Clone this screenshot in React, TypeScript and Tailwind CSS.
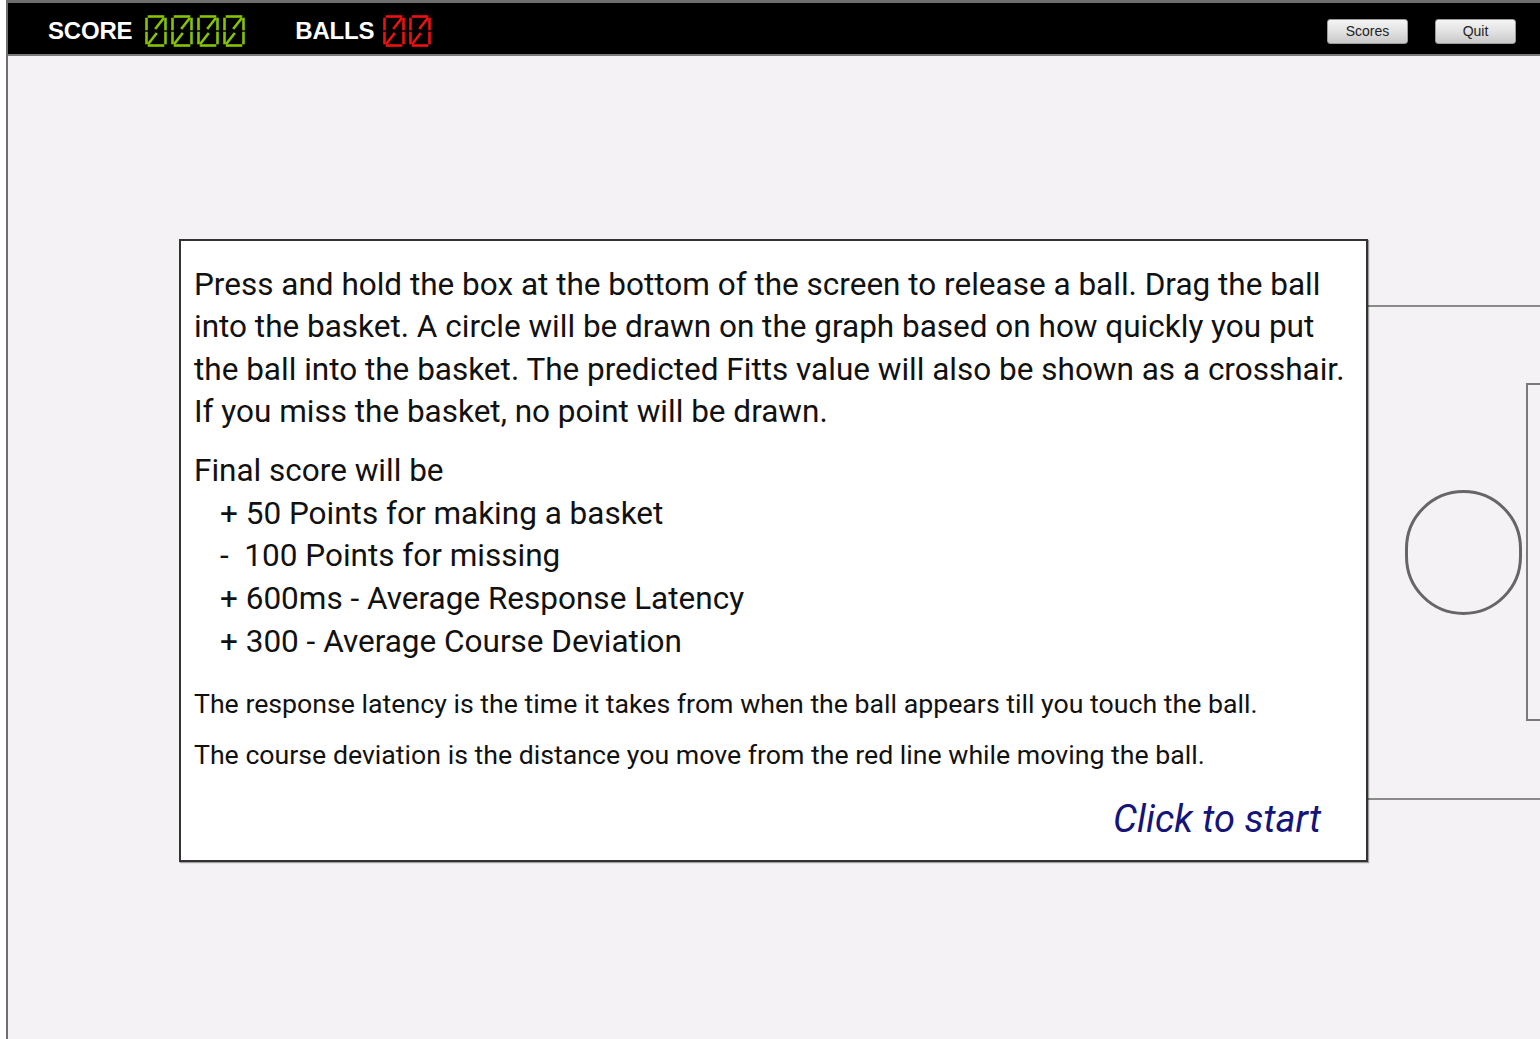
import React from 'react';

// one segmented "0" of the LCD counter, diagonal strokes included
function Digit({ color }: { color: string }) {
  const segs = [
    'M5 2.5 L19 2.5',
    'M2.5 5 L2.5 15',
    'M21.5 5 L21.5 15',
    'M2.5 19 L2.5 29',
    'M21.5 19 L21.5 29',
    'M5 31.5 L19 31.5',
    'M12 14 L19 5',
    'M5 29 L12 20',
  ];
  return (
    <svg width="26" height="34" viewBox="0 0 24 34" className="block">
      {segs.map((d, i) => (
        <path key={i} d={d} stroke={color} strokeWidth="2.6" fill="none" strokeLinecap="square" />
      ))}
    </svg>
  );
}

function Counter({ n, color }: { n: number; color: string }) {
  return (
    <div className="flex">
      {Array.from({ length: n }).map((_, i) => (
        <Digit key={i} color={color} />
      ))}
    </div>
  );
}

function BarButton({ label }: { label: string }) {
  return (
    <button className="w-[81px] h-[25px] rounded-[3px] border border-[#9a9a9a] bg-gradient-to-b from-[#f4f4f4] via-[#e2e2e2] to-[#c8c8c8] text-[14px] leading-none text-[#222] font-['Liberation_Sans',Arial,sans-serif]">
      {label}
    </button>
  );
}

export default function App() {
  return (
    <div className="min-h-screen bg-white pl-[6px]">
      <div className="h-[1039px] border-l-2 border-t-[3px] border-[#6e6e6e] flex flex-col overflow-hidden">
        {/* top bar */}
        <div className="h-[53px] shrink-0 bg-black border-b-2 border-[#7a7a7a] flex items-center pl-[40px] pr-[24px] pt-[5px] font-['Liberation_Sans',Arial,sans-serif]">
          <span className="text-white font-bold text-[24px] tracking-[-0.2px]">SCORE</span>
          <div className="ml-[11px]">
            <Counter n={4} color="#86c400" />
          </div>
          <span className="ml-[48px] text-white font-bold text-[24px] tracking-[-0.2px]">BALLS</span>
          <div className="ml-[7px]">
            <Counter n={2} color="#ee1111" />
          </div>
          <div className="ml-auto flex gap-[27px]">
            <BarButton label="Scores" />
            <BarButton label="Quit" />
          </div>
        </div>

        {/* playing field */}
        <div className="relative flex-1 bg-[#f4f2f5] pt-[183px] pl-[171px]">
          <div className="absolute left-[1359px] right-0 top-[249px] h-[2px] bg-[#8a8a8a]" />
          <div className="absolute left-[1359px] right-0 top-[742px] h-[2px] bg-[#8a8a8a]" />
          <div className="absolute left-[1518px] top-[327px] w-[40px] h-[338px] border-2 border-[#7a7a7a]" />
          <div className="absolute left-[1397px] top-[434px] w-[117px] h-[125px] rounded-full border-[3px] border-[#666]" />

          {/* instructions */}
          <div className="relative w-[1189px] h-[623px] bg-white border-2 border-[#333] shadow-[1px_1px_1px_rgba(0,0,0,0.35)] pl-[13px] pr-[10px] pt-[23px] font-['Roboto',sans-serif] text-[#111]">
            <p className="text-[31.5px] leading-[42.3px]">
              Press and hold the box at the bottom of the screen to release a ball. Drag the ball into the basket. A circle will be drawn on the graph based on how quickly you put the ball into the basket. The predicted Fitts value will also be shown as a crosshair. If you miss the basket, no point will be drawn.
            </p>
            <p className="mt-[17px] text-[31.5px] leading-[42.5px]">Final score will be</p>
            <ul className="pl-[26px] text-[31.5px] leading-[42.8px]">
              <li>+ 50 Points for making a basket</li>
              <li>-&nbsp;&nbsp;100 Points for missing</li>
              <li>+ 600ms - Average Response Latency</li>
              <li>+ 300 - Average Course Deviation</li>
            </ul>
            <p className="mt-[19px] text-[26.7px] leading-[42px]">
              The response latency is the time it takes from when the ball appears till you touch the ball.
            </p>
            <p className="mt-[9px] text-[26.7px] leading-[42px]">
              The course deviation is the distance you move from the red line while moving the ball.
            </p>
            <div className="mt-[18px] text-right pr-[35px]">
              <span className="italic text-[38px] leading-[50px] text-[#14147a]">Click to start</span>
            </div>
          </div>
        </div>
      </div>
    </div>
  );
}
